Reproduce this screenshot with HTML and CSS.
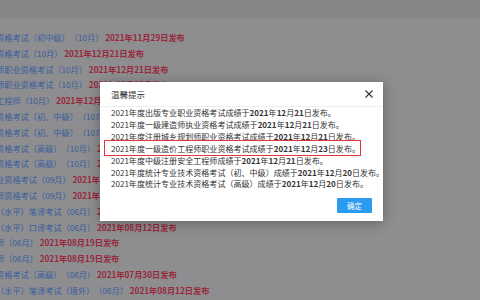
FILE: index.html
```html
<!DOCTYPE html>
<html lang="zh-CN">

<head>
<meta charset="UTF-8">
<meta name="viewport" content="width=device-width, initial-scale=1.0">
<title>成绩发布时间</title>
<link rel="stylesheet" href="styles.css">
</head>

<body>

<div class="topbar"></div>

<ul class="exam-list">
    <li><span class="name">资格考试（初中级）（10月）</span> <span class="date">2021年11月29日发布</span></li>
    <li><span class="name">资格考试（10月）</span> <span class="date">2021年12月21日发布</span></li>
    <li><span class="name">师职业资格考试（10月）</span> <span class="date">2021年12月21日发布</span></li>
    <li><span class="name">师职业资格考试（10月）</span> <span class="date">2021年12月23日发布</span></li>
    <li><span class="name">工程师（10月）</span> <span class="date">2021年12月21日发布</span></li>
    <li><span class="name">资格考试（初、中级）（10月）</span> <span class="date">2021年12月20日发布</span></li>
    <li><span class="name">资格考试（初、中级）（10月）</span> <span class="date">2021年12月20日发布</span></li>
    <li><span class="name">资格考试（高级）（10月）</span> <span class="date">2021年12月20日发布</span></li>
    <li><span class="name">资格考试（高级）（10月）</span> <span class="date">2021年12月20日发布</span></li>
    <li><span class="name">业资格考试（09月）</span> <span class="date">2021年11月30日发布</span></li>
    <li><span class="name">师资格考试（09月）</span> <span class="date">2021年11月30日发布</span></li>
    <li><span class="name">（水平）笔译考试（06月）</span> <span class="date">2021年08月12日发布</span></li>
    <li><span class="name">（水平）口译考试（06月）</span> <span class="date">2021年08月12日发布</span></li>
    <li><span class="name">师（06月）</span> <span class="date">2021年08月19日发布</span></li>
    <li><span class="name">师（06月）</span> <span class="date">2021年08月19日发布</span></li>
    <li><span class="name">资格考试（高级）（06月）</span> <span class="date">2021年07月30日发布</span></li>
    <li><span class="name">（水平）笔译考试（境外）（06月）</span> <span class="date">2021年08月12日发布</span></li>
</ul>

<div class="layer">
    <div class="layer-title">
        温馨提示
        <svg class="layer-close" width="8" height="8" viewBox="0 0 8 8">
            <path d="M0.5 0.5 L7.5 7.5 M7.5 0.5 L0.5 7.5" stroke="#333" stroke-width="1.1" fill="none"/>
        </svg>
    </div>
    <div class="layer-content">
        <p>2021年度出版专业职业资格考试成绩于<b>2021</b>年<b>12</b>月<b>21</b>日发布。</p>
        <p>2021年度一级建造师执业资格考试成绩于<b>2021</b>年<b>12</b>月<b>21</b>日发布。</p>
        <p>2021年度注册城乡规划师职业资格考试成绩于<b>2021</b>年<b>12</b>月<b>21</b>日发布。</p>
        <p><span class="mark">2021年度一级造价工程师职业资格考试成绩于<b>2021</b>年<b>12</b>月<b>23</b>日发布。</span></p>
        <p>2021年度中级注册安全工程师成绩于<b>2021</b>年<b>12</b>月<b>21</b>日发布。</p>
        <p>2021年度统计专业技术资格考试（初、中级）成绩于<b>2021</b>年<b>12</b>月<b>20</b>日发布。</p>
        <p>2021年度统计专业技术资格考试（高级）成绩于<b>2021</b>年<b>12</b>月<b>20</b>日发布。</p>
    </div>
    <div class="layer-btns">
        <a class="btn">确定</a>
    </div>
</div>

</body>

</html>
```

FILE: styles.css
```css
body {
    font-family: "Noto Sans CJK SC", "Noto Sans", sans-serif;
    background-color: #8e8d8f;
    margin: 0;
    overflow: hidden;
    height: 300px;
    text-spacing-trim: space-all;
    font-feature-settings: "chws" 0, "halt" 0;
}

.topbar {
    height: 18px;
    background-color: #868587;
    border-bottom: 1px solid #8a898b;
}

.exam-list {
    list-style: none;
    margin: 11px 0 0 -4px;
    padding: 0;
    font-size: 8.2px;
    line-height: 15.8px;
    white-space: nowrap;
}

.exam-list .name {
    color: #385e9f;
}

.exam-list .date {
    color: #98283a;
    font-weight: bold;
}

.layer {
    position: absolute;
    left: 100px;
    top: 82px;
    width: 283px;
    background-color: #ffffff;
    box-shadow: 0 2px 12px rgba(0, 0, 0, 0.3);
}

.layer-title {
    position: relative;
    height: 24px;
    line-height: 24px;
    padding-left: 11px;
    font-size: 8.5px;
    color: #333333;
    border-bottom: 1px solid #eeeeee;
}

.layer-close {
    position: absolute;
    right: 10px;
    top: 8px;
}

.layer-content {
    padding: 0 11px;
    font-size: 8.05px;
    line-height: 11.9px;
    color: #333333;
    white-space: nowrap;
}

.layer-content p {
    margin: 0;
}

.layer-content b {
    font-weight: bold;
}

.mark {
    position: relative;
}

.mark::after {
    content: "";
    position: absolute;
    left: -7px;
    right: -1px;
    top: -3px;
    bottom: -2px;
    border: 1.5px solid #e2353a;
}

.layer-btns {
    display: flex;
    justify-content: flex-end;
    padding: 8px 11px 8px;
}

.btn {
    width: 35px;
    height: 15px;
    line-height: 15px;
    text-align: center;
    font-size: 7.5px;
    color: #ffffff;
    background-color: #2b9bef;
    border-radius: 1px;
}
```
